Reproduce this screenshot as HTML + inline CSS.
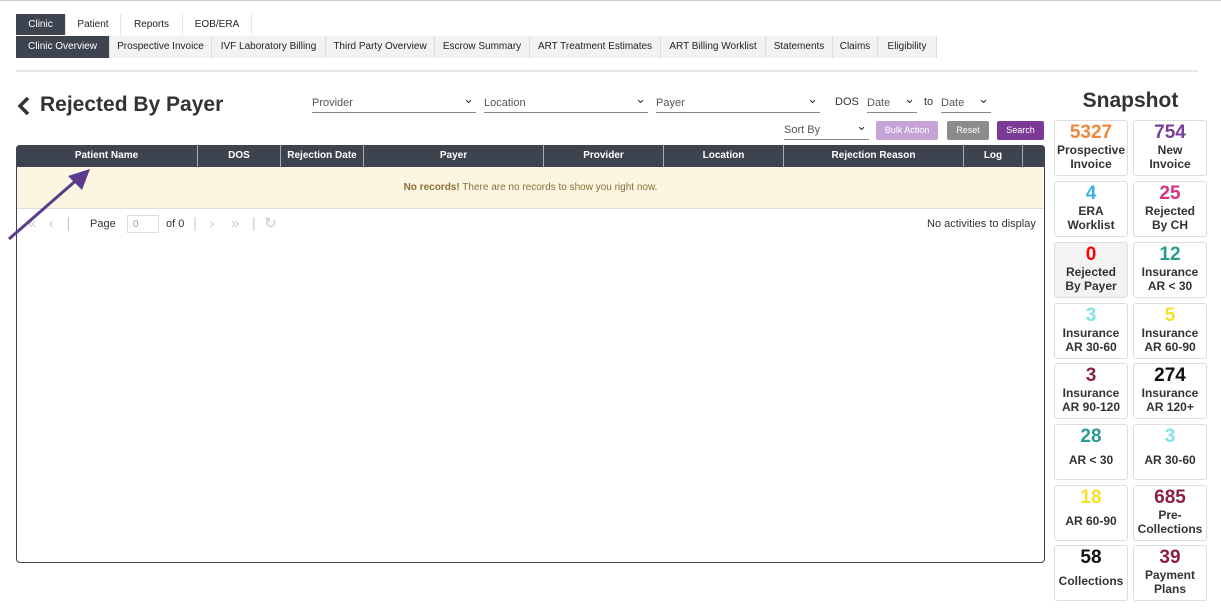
<html><head><style>
body{margin:0;width:1221px;height:611px;background:#fff;font-family:"Liberation Sans",sans-serif;position:relative;overflow:hidden;border-top:1px solid #ccc;box-sizing:border-box}
.a{position:absolute}
.t1{top:13px;height:21px;font-size:10px;line-height:21px;text-align:center;color:#222;background:#fff;border-right:1px solid #e6e6e6}
.t2{top:35px;height:22px;font-size:10px;line-height:22px;text-align:center;color:#222;background:#f2f2f2;border-right:1px solid #ddd}
.sel{font-size:11px;color:#555;border-bottom:1px solid #888;height:16px;line-height:14px}
.sel:after{content:"⌄";position:absolute;right:2px;top:-4px;font-size:13px;color:#333}
.th{top:144px;height:22px;line-height:22px;color:#fff;font-size:10px;font-weight:bold;text-align:center;border-right:1px solid #aaa}
.c{width:72px;height:54px;border:1px solid #ddd;border-radius:3px;text-align:center;font-size:12px;font-weight:bold;color:#333;line-height:14px}
.c b{display:block;font-size:19px;line-height:21px;margin-top:1px}
.btn{top:120px;height:19px;line-height:19px;font-size:9px;color:#fff;text-align:center;border-radius:2px}
</style></head><body>
<div class="a t1" style="left:16px;width:49px;background:#3d4450;color:#fff">Clinic</div>
<div class="a t1" style="left:66px;width:54px">Patient</div>
<div class="a t1" style="left:121px;width:61px">Reports</div>
<div class="a t1" style="left:183px;width:68px">EOB/ERA</div>
<div class="a t2" style="left:16px;width:93px;background:#3d4450;color:#fff">Clinic Overview</div>
<div class="a t2" style="left:110px;width:101px">Prospective Invoice</div>
<div class="a t2" style="left:212px;width:113px">IVF Laboratory Billing</div>
<div class="a t2" style="left:326px;width:108px">Third Party Overview</div>
<div class="a t2" style="left:435px;width:94px">Escrow Summary</div>
<div class="a t2" style="left:530px;width:130px">ART Treatment Estimates</div>
<div class="a t2" style="left:661px;width:104px">ART Billing Worklist</div>
<div class="a t2" style="left:766px;width:66px">Statements</div>
<div class="a t2" style="left:833px;width:44px">Claims</div>
<div class="a t2" style="left:878px;width:58px">Eligibility</div>
<div class="a" style="left:16px;top:69px;width:1182px;height:2px;background:#e6e6e6"></div>
<svg class="a" style="left:16px;top:95px" width="16" height="20"><path d="M12 2 L4 10 L12 18" fill="none" stroke="#333" stroke-width="3.5"/></svg>
<div class="a" style="left:40px;top:92px;font-size:21px;font-weight:bold;color:#333">Rejected By Payer</div>
<div class="a sel" style="left:312px;top:95px;width:164px">Provider</div>
<div class="a sel" style="left:484px;top:95px;width:164px">Location</div>
<div class="a sel" style="left:656px;top:95px;width:164px">Payer</div>
<div class="a" style="left:835px;top:95px;font-size:11px;color:#333">DOS</div>
<div class="a sel" style="left:867px;top:95px;width:50px">Date</div>
<div class="a" style="left:924px;top:95px;font-size:11px;color:#333">to</div>
<div class="a sel" style="left:941px;top:95px;width:50px">Date</div>
<div class="a sel" style="left:784px;top:122px;width:85px">Sort By</div>
<div class="a btn" style="left:876px;width:62px;background:#c5a3d6">Bulk Action</div>
<div class="a btn" style="left:947px;width:42px;background:#8c8c8c">Reset</div>
<div class="a btn" style="left:997px;width:47px;background:#7b3a96">Search</div>
<div class="a" style="left:16px;top:144px;width:1027px;height:416px;border:1px solid #3d4450;border-radius:4px"></div>
<div class="a" style="left:16px;top:144px;width:1029px;height:22px;background:#3d4450;border-radius:4px 4px 0 0"></div>
<div class="a th" style="left:16px;width:181px">Patient Name</div>
<div class="a th" style="left:198px;width:82px">DOS</div>
<div class="a th" style="left:281px;width:82px">Rejection Date</div>
<div class="a th" style="left:364px;width:179px">Payer</div>
<div class="a th" style="left:544px;width:119px">Provider</div>
<div class="a th" style="left:664px;width:119px">Location</div>
<div class="a th" style="left:784px;width:179px">Rejection Reason</div>
<div class="a th" style="left:964px;width:58px">Log</div>
<div class="a" style="left:17px;top:166px;width:1027px;height:41px;background:#fcf6e1;border-bottom:1px solid #ddd;text-align:center;line-height:42px;font-size:10px;color:#8a6d3b"><b>No records!</b> There are no records to show you right now.</div>
<div class="a" style="left:28px;top:214px;font-size:15px;color:#ccc">«&nbsp;&nbsp;&nbsp;‹&nbsp;&nbsp;&nbsp;|</div>
<div class="a" style="left:90px;top:217px;font-size:11px;color:#333">Page</div>
<div class="a" style="left:127px;top:214px;width:32px;height:18px;border:1px solid #ddd;font-size:10px;color:#999;line-height:18px;padding-left:5px;box-sizing:border-box">0</div>
<div class="a" style="left:166px;top:217px;font-size:11px;color:#333">of 0</div>
<div class="a" style="left:193px;top:213px;font-size:15px;color:#ccc">|&nbsp;&nbsp;&nbsp;›&nbsp;&nbsp;&nbsp;&nbsp;»&nbsp;&nbsp;&nbsp;|&nbsp;&nbsp;↻</div>
<div class="a" style="left:927px;top:217px;font-size:11px;color:#333">No activities to display</div>
<svg class="a" style="left:0;top:160px" width="100" height="85"><line x1="9" y1="78" x2="80" y2="16" stroke="#5b3b8c" stroke-width="3"/><polygon points="90,8 68,15 82,29" fill="#5b3b8c"/></svg>
<div class="a" style="left:1054px;top:88px;width:153px;text-align:center;font-size:21px;font-weight:bold;color:#333">Snapshot</div>
<div class="a c" style="left:1054px;top:119px"><b style="color:#f0883e">5327</b>Prospective Invoice</div>
<div class="a c" style="left:1133px;top:119px"><b style="color:#7b3f9a">754</b>New<br>Invoice</div>
<div class="a c" style="left:1054px;top:180px"><b style="color:#3bb0e6">4</b>ERA<br>Worklist</div>
<div class="a c" style="left:1133px;top:180px"><b style="color:#d63384">25</b>Rejected<br>By CH</div>
<div class="a c" style="left:1054px;top:241px;background:#f3f3f3"><b style="color:#f00">0</b>Rejected<br>By Payer</div>
<div class="a c" style="left:1133px;top:241px"><b style="color:#2a9d8f">12</b>Insurance<br>AR &lt; 30</div>
<div class="a c" style="left:1054px;top:302px"><b style="color:#7fe3ea">3</b>Insurance<br>AR 30-60</div>
<div class="a c" style="left:1133px;top:302px"><b style="color:#f5e02a">5</b>Insurance<br>AR 60-90</div>
<div class="a c" style="left:1054px;top:362px"><b style="color:#8b2040">3</b>Insurance<br>AR 90-120</div>
<div class="a c" style="left:1133px;top:362px"><b style="color:#111">274</b>Insurance<br>AR 120+</div>
<div class="a c" style="left:1054px;top:423px"><b style="color:#2a9d8f">28</b><div style="margin-top:6px">AR &lt; 30</div></div>
<div class="a c" style="left:1133px;top:423px"><b style="color:#7fe3ea">3</b><div style="margin-top:6px">AR 30-60</div></div>
<div class="a c" style="left:1054px;top:484px"><b style="color:#f5e02a">18</b><div style="margin-top:6px">AR 60-90</div></div>
<div class="a c" style="left:1133px;top:484px"><b style="color:#8b2040">685</b>Pre-<br>Collections</div>
<div class="a c" style="left:1054px;top:544px"><b style="color:#111">58</b><div style="margin-top:6px">Collections</div></div>
<div class="a c" style="left:1133px;top:544px"><b style="color:#8b2040">39</b>Payment<br>Plans</div>
</body></html>
